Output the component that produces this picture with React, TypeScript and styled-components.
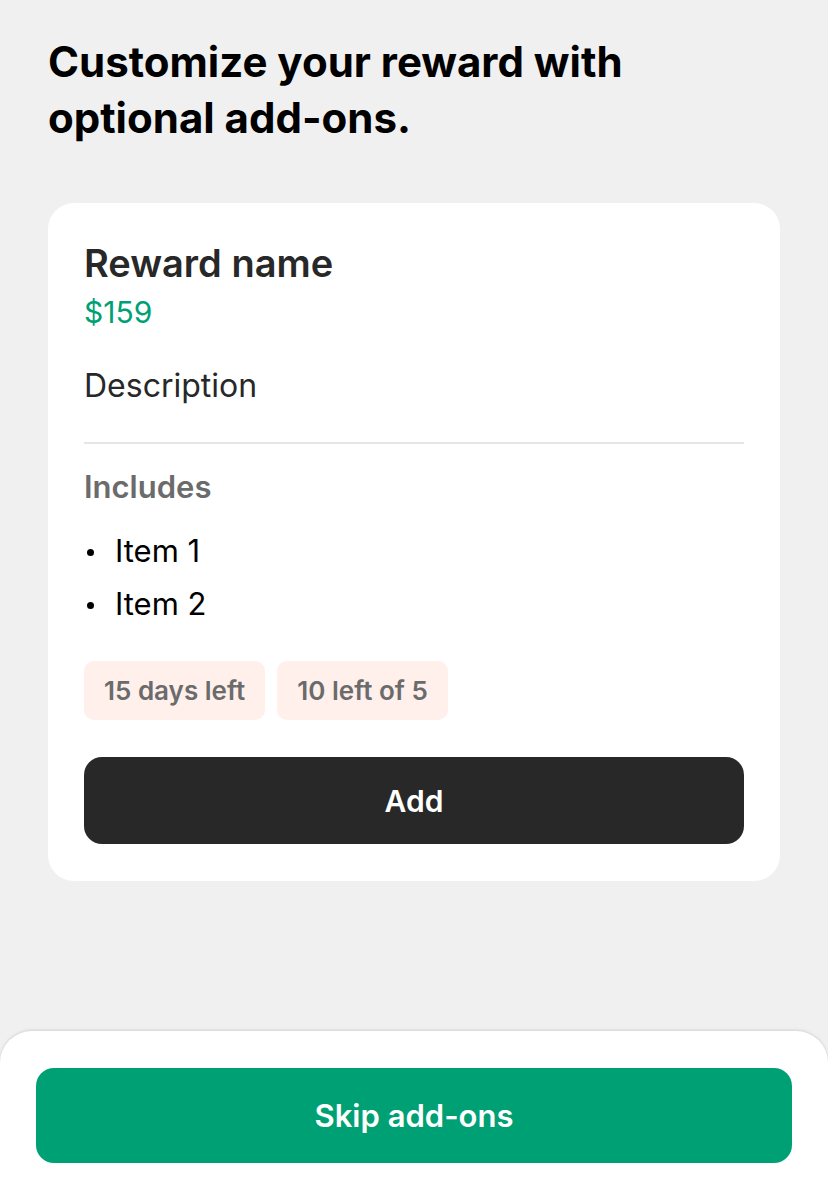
import React from "react";
import styled, { createGlobalStyle } from "styled-components";

const GlobalStyle = createGlobalStyle`
  html, body {
    margin: 0;
    padding: 0;
    background: #f0f0f0;
  }
  body {
    font-family: Inter, "Noto Sans", "Liberation Sans", sans-serif;
    -webkit-font-smoothing: antialiased;
  }
  * {
    box-sizing: border-box;
  }
`;

const Page = styled.div`
  min-height: 100vh;
  display: flex;
  flex-direction: column;
  background: #f0f0f0;
`;

const Content = styled.main`
  flex: 1;
  padding: 34px 48px 0;
`;

const Title = styled.h1`
  margin: 0 0 57px;
  font-size: 42px;
  line-height: 56px;
  font-weight: 700;
  color: #000;
`;

const Card = styled.section`
  background: #fff;
  border-radius: 26px;
  padding: 36px 36px 37px;
`;

const RewardName = styled.h2`
  margin: 0;
  font-size: 38px;
  line-height: 48px;
  font-weight: 600;
  color: #282828;
`;

const Price = styled.div`
  margin-top: 7px;
  font-size: 30px;
  line-height: 36px;
  color: #00a075;
`;

const Description = styled.p`
  margin: 36px 0 0;
  font-size: 32px;
  line-height: 40px;
  color: #282828;
`;

const Divider = styled.hr`
  margin: 36px 0 0;
  border: none;
  height: 2px;
  background: #e6e6e6;
`;

const SectionLabel = styled.h3`
  margin: 23px 0 0;
  font-size: 31px;
  line-height: 40px;
  font-weight: 600;
  color: #6b6b6b;
`;

const ItemList = styled.ul`
  margin: 17px 0 0;
  padding: 0;
  list-style: none;
`;

const Item = styled.li`
  position: relative;
  padding-left: 31px;
  font-size: 31px;
  line-height: 53px;
  color: #000;

  &::before {
    content: "";
    position: absolute;
    left: 3px;
    top: 25px;
    width: 7px;
    height: 7px;
    border-radius: 50%;
    background: #000;
  }
`;

const BadgeRow = styled.div`
  display: flex;
  gap: 12px;
  margin-top: 31px;
`;

const Badge = styled.span`
  display: inline-flex;
  align-items: center;
  height: 59px;
  padding: 0 20px;
  border-radius: 10px;
  background: #fff0eb;
  color: #6b6b6b;
  font-size: 26px;
  font-weight: 600;
`;

const Button = styled.button<{ $tone: "dark" | "green"; $height: number }>`
  display: flex;
  align-items: center;
  justify-content: center;
  width: 100%;
  height: ${(p) => p.$height}px;
  border: none;
  border-radius: 18px;
  background: ${(p) => (p.$tone === "dark" ? "#282828" : "#00a075")};
  color: #fff;
  font-family: inherit;
  font-size: ${(p) => (p.$tone === "dark" ? 30 : 31)}px;
  font-weight: 600;
  cursor: pointer;
`;

const CardAction = styled.div`
  margin-top: 37px;
`;

const Footer = styled.footer`
  margin-top: 120px;
  background: #fff;
  border-radius: 32px 32px 0 0;
  box-shadow: 0 -1px 3px rgba(0, 0, 0, 0.12);
  padding: 37px 36px 37px;
`;

export default function App() {
  return (
    <>
      <GlobalStyle />
      <Page>
        <Content>
          <Title>
            Customize your reward with
            <br />
            optional add-ons.
          </Title>
          <Card>
            <RewardName>Reward name</RewardName>
            <Price>$159</Price>
            <Description>Description</Description>
            <Divider />
            <SectionLabel>Includes</SectionLabel>
            <ItemList>
              <Item>Item 1</Item>
              <Item>Item 2</Item>
            </ItemList>
            <BadgeRow>
              <Badge>15 days left</Badge>
              <Badge>10 left of 5</Badge>
            </BadgeRow>
            <CardAction>
              <Button $tone="dark" $height={87}>
                Add
              </Button>
            </CardAction>
          </Card>
        </Content>
        <Footer>
          <Button $tone="green" $height={95}>
            Skip add-ons
          </Button>
        </Footer>
      </Page>
    </>
  );
}
